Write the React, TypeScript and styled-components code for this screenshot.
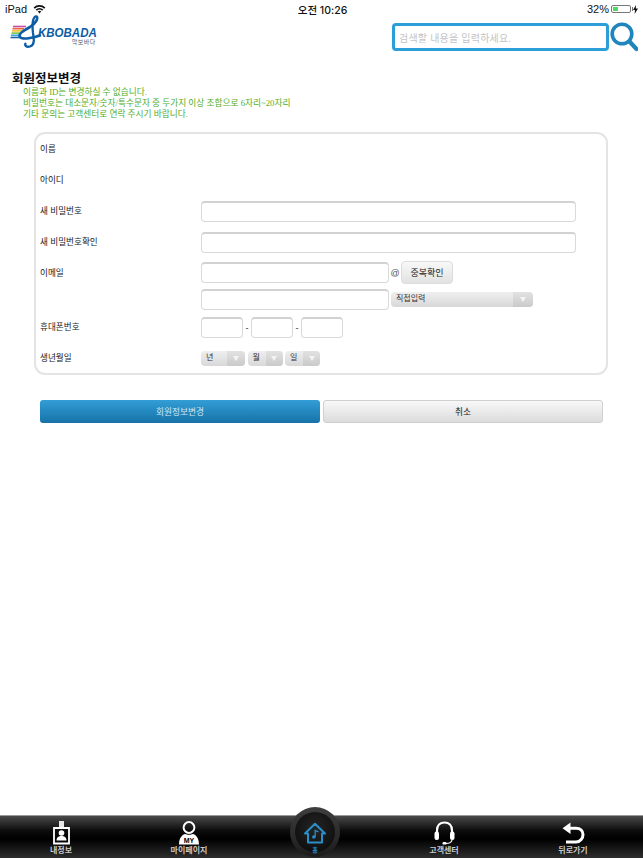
import styled, { createGlobalStyle } from "styled-components";

const GlobalStyle = createGlobalStyle`
  html, body {
    margin: 0;
    padding: 0;
    background: #fff;
    font-family: "Liberation Sans", "Noto Sans CJK KR", sans-serif;
  }
  * { box-sizing: border-box; }
`;

const App = () => {
  return (
    <Page>
      <GlobalStyle />
      <StatusBar>
        <StatusLeft>
          iPad
          <svg width="13" height="10" viewBox="0 0 13 10">
            <path d="M0.6 3.4A8.4 8.4 0 0 1 12.4 3.4L11.2 4.7A6.6 6.6 0 0 0 1.8 4.7Z" fill="#111" />
            <path d="M2.7 5.5A5.4 5.4 0 0 1 10.3 5.5L9.1 6.7A3.7 3.7 0 0 0 3.9 6.7Z" fill="#111" />
            <path d="M4.8 7.5A2.5 2.5 0 0 1 8.2 7.5L6.5 9.4Z" fill="#111" />
          </svg>
        </StatusLeft>
        <StatusTime>오전 10:26</StatusTime>
        <StatusRight>
          32%
          <Battery><BatteryLevel /></Battery>
          <svg width="5" height="9" viewBox="0 0 5 9">
            <path d="M3 0L0 5H2L1.6 9L5 3.6H2.8Z" fill="#111" />
          </svg>
        </StatusRight>
      </StatusBar>

      <Header>
        <Logo>
          <svg width="32" height="34" viewBox="0 0 32 34">
            <path d="M3 11.5H16" stroke="#c64aa5" strokeWidth="1.6" />
            <path d="M2.5 13.7H14" stroke="#e9683a" strokeWidth="1.6" />
            <path d="M2 15.9H12" stroke="#f2c230" strokeWidth="1.6" />
            <path d="M1.5 18.1H10" stroke="#7cc242" strokeWidth="1.6" />
            <path d="M1 20.3H9" stroke="#35a7dc" strokeWidth="1.6" />
            <path d="M0.5 22.5H9" stroke="#1b65b0" strokeWidth="1.6" />
            <path
              d="M26 1C29 3 26 8 20 12C13 16 8 19 10 22C12 25 24 23 31 20"
              fill="none"
              stroke="#0d5ca6"
              strokeWidth="2.6"
            />
            <path
              d="M26 1C22 3 22 10 23 18C24 24 25 30 20 31.5C16 32.5 14 30 16 28"
              fill="none"
              stroke="#0d5ca6"
              strokeWidth="2.3"
            />
          </svg>
          <LogoText>
            <LogoWord>KBOBADA</LogoWord>
            <LogoSub>악보바다</LogoSub>
          </LogoText>
        </Logo>
        <SearchArea>
          <SearchBox>검색할 내용을 입력하세요.</SearchBox>
          <svg width="28" height="30" viewBox="0 0 28 30">
            <circle cx="12" cy="12" r="9.8" fill="none" stroke="#1f86bd" strokeWidth="3.6" />
            <path d="M19.5 19.5L26.5 27" stroke="#1f86bd" strokeWidth="4.2" strokeLinecap="round" />
          </svg>
        </SearchArea>
      </Header>

      <Main>
        <Title>회원정보변경</Title>
        <Notes>
          <p>이름과 ID는 변경하실 수 없습니다.</p>
          <p>비밀번호는 대소문자/숫자/특수문자 중 두가지 이상 조합으로 6자리~20자리</p>
          <p>기타 문의는 고객센터로 연락 주시기 바랍니다.</p>
        </Notes>

        <FormCard>
          <Row><Label>이름</Label></Row>
          <Row><Label>아이디</Label></Row>
          <Row>
            <Label>새 비밀번호</Label>
            <TextField $width={375} />
          </Row>
          <Row>
            <Label>새 비밀번호확인</Label>
            <TextField $width={375} />
          </Row>
          <EmailRow>
            <Label>이메일</Label>
            <EmailFields>
              <EmailLine>
                <TextField $width={188} />
                <AtSign>@</AtSign>
                <CheckButton>중복확인</CheckButton>
              </EmailLine>
              <EmailLine>
                <TextField $width={188} />
                <SelectBox $width={142} $gap={2}>
                  직접입력
                  <SelectArrow $width={20} />
                </SelectBox>
              </EmailLine>
            </EmailFields>
          </EmailRow>
          <Row>
            <Label>휴대폰번호</Label>
            <PhoneFields>
              <TextField $width={42} />
              <Dash>-</Dash>
              <TextField $width={42} />
              <Dash>-</Dash>
              <TextField $width={42} />
            </PhoneFields>
          </Row>
          <Row>
            <Label>생년월일</Label>
            <BirthFields>
              <SelectBox $width={44}>년<SelectArrow $width={18} /></SelectBox>
              <SelectBox $width={35}>월<SelectArrow $width={17} /></SelectBox>
              <SelectBox $width={35}>일<SelectArrow $width={17} /></SelectBox>
            </BirthFields>
          </Row>
        </FormCard>

        <Actions>
          <PrimaryButton>회원정보변경</PrimaryButton>
          <CancelButton>취소</CancelButton>
        </Actions>
      </Main>

      <TabBar>
        <Tab>
          <svg width="17" height="24" viewBox="0 0 17 24">
            <path d="M6 0H11V6H6Z" fill="#e8e8e8" />
            <path d="M1 7H16V22.5H1Z" fill="none" stroke="#fff" strokeWidth="1.8" />
            <circle cx="8.5" cy="12" r="2.8" fill="#fff" />
            <path d="M3.5 19.5C3.5 16 6 15 8.5 15C11 15 13.5 16 13.5 19.5Z" fill="#fff" />
          </svg>
          <TabLabel>내정보</TabLabel>
        </Tab>
        <Tab>
          <svg width="20" height="24" viewBox="0 0 20 24">
            <circle cx="10" cy="6.5" r="5.4" fill="none" stroke="#fff" strokeWidth="2" />
            <path d="M0 23.5C0 16 4 13.5 6 13C8 14 12 14 14 13C16 13.5 20 16 20 23.5Z" fill="#fff" />
            <text x="10" y="22" textAnchor="middle" fontSize="7" fontWeight="700" fill="#000" fontFamily="Liberation Sans">MY</text>
          </svg>
          <TabLabel>마이페이지</TabLabel>
        </Tab>
        <Tab />
        <Tab>
          <svg width="21" height="24" viewBox="0 0 21 24">
            <path d="M3 14V9.5C3 4.5 6 1.5 10.5 1.5C15 1.5 18 4.5 18 9.5V14" fill="none" stroke="#fff" strokeWidth="2.2" />
            <rect x="0.5" y="10.5" width="4.5" height="8.5" rx="2" fill="#fff" />
            <rect x="16" y="10.5" width="4.5" height="8.5" rx="2" fill="#fff" />
            <path d="M18 19C17.5 21.5 15.5 22.5 12 22.5" fill="none" stroke="#fff" strokeWidth="1.2" />
            <rect x="8.5" y="21" width="4" height="2.6" rx="1.2" fill="#fff" />
          </svg>
          <TabLabel>고객센터</TabLabel>
        </Tab>
        <Tab>
          <svg width="23" height="23" viewBox="0 0 23 23">
            <path d="M8.5 0.5V12L0.5 6.2Z" fill="#fff" />
            <path d="M7 6.2H14C18.5 6.2 21 9 21 12.5C21 16 18.5 20 14 20H4" fill="none" stroke="#fff" strokeWidth="3" />
          </svg>
          <TabLabel>뒤로가기</TabLabel>
        </Tab>
        <HomeButton>
          <HomeInner>
            <svg width="22" height="22" viewBox="0 0 22 22">
              <path d="M1 11.5L11 1.8L21 11.5H18V20.5H4V11.5Z" fill="none" stroke="#2a8fc8" strokeWidth="2" strokeLinejoin="round" />
              <path d="M11.2 15V8.5L14.5 9.8" fill="none" stroke="#2a8fc8" strokeWidth="1.3" />
              <circle cx="9.8" cy="15" r="1.7" fill="#2a8fc8" />
            </svg>
            <HomeLabel>홈</HomeLabel>
          </HomeInner>
        </HomeButton>
      </TabBar>
    </Page>
  );
};

export default App;

const Page = styled.div`
  width: 643px;
  height: 858px;
  display: flex;
  flex-direction: column;
  overflow: hidden;
`;

const StatusBar = styled.div`
  height: 17px;
  flex-shrink: 0;
  padding: 1px 5px 0;
  display: grid;
  grid-template-columns: 1fr auto 1fr;
  align-items: center;
  font-size: 11px;
  color: #111;
`;

const StatusLeft = styled.div`
  display: flex;
  align-items: center;
  gap: 6px;
`;

const StatusTime = styled.div`
  font-family: "Inter", "Noto Sans CJK KR", sans-serif;
  font-weight: 500;
  font-size: 10.5px;
  transform: translateX(1px);
`;

const StatusRight = styled.div`
  display: flex;
  align-items: center;
  justify-content: flex-end;
  gap: 2px;
`;

const Battery = styled.div`
  width: 20px;
  height: 8px;
  border: 1px solid #777;
  border-radius: 2px;
  padding: 1px;
  position: relative;
  &::after {
    content: "";
    position: absolute;
    right: -3px;
    top: 1px;
    width: 1px;
    height: 4px;
    background: #777;
  }
`;

const BatteryLevel = styled.div`
  width: 32%;
  height: 100%;
  background: #4cd964;
`;

const Header = styled.header`
  height: 38px;
  flex-shrink: 0;
  display: flex;
  justify-content: space-between;
  align-items: flex-start;
  padding: 0 5px 0 10px;
`;

const Logo = styled.div`
  display: flex;
  align-items: flex-start;
  height: 34px;
  margin-top: -2px;
`;

const LogoText = styled.div`
  margin: 11px 0 0 -4px;
  display: flex;
  flex-direction: column;
  align-items: flex-end;
`;

const LogoWord = styled.div`
  font-size: 11.5px;
  font-style: italic;
  font-weight: 700;
  line-height: 12px;
  color: #0d5ca6;
  transform: scaleY(1.15);
`;

const LogoSub = styled.div`
  font-size: 6px;
  line-height: 6px;
  letter-spacing: 0.5px;
  color: #555;
  margin: 1px 1px 0 0;
`;

const SearchArea = styled.div`
  display: flex;
  align-items: center;
  gap: 1px;
  margin-top: 5px;
`;

const SearchBox = styled.div`
  width: 217px;
  height: 28px;
  border: 3px solid #2c9fd8;
  border-radius: 4px;
  padding-left: 4px;
  display: flex;
  align-items: center;
  font-size: 10px;
  letter-spacing: 0.2px;
  color: #c4c4c4;
`;

const Main = styled.main`
  flex: 1;
  padding: 16px 0 0;
`;

const Title = styled.h1`
  margin: 0 0 0 12px;
  font-size: 12.5px;
  line-height: 16px;
  font-weight: 700;
  color: #111;
`;

const Notes = styled.div`
  margin-left: 23px;
  font-family: "Liberation Serif", "Noto Sans CJK KR", serif;
  font-size: 8.7px;
  line-height: 11px;
  color: #4fae1f;
  p {
    margin: 0;
  }
`;

const FormCard = styled.section`
  width: 574px;
  height: 243px;
  margin: 12px 0 0 34px;
  padding: 0 0 0 4px;
  border: 2px solid #e4e4e4;
  border-radius: 11px;
`;

const Row = styled.div`
  display: grid;
  grid-template-columns: 161px 1fr;
  align-items: center;
  height: 31px;
`;

const EmailRow = styled(Row)`
  height: 54px;
  align-items: start;
  padding-top: 3px;
`;

const Label = styled.div`
  font-size: 8.6px;
  line-height: 25px;
  color: #222;
`;

const TextField = styled.div<{ $width: number }>`
  width: ${(p) => p.$width}px;
  height: 21px;
  background: #fff;
  border: 1px solid #d9d9d9;
  border-top: 2px solid #d2d2d2;
  border-radius: 4px;
`;

const EmailFields = styled.div`
  display: flex;
  flex-direction: column;
  gap: 5px;
`;

const EmailLine = styled.div`
  display: flex;
  align-items: center;
`;

const AtSign = styled.span`
  width: 12px;
  text-align: center;
  font-size: 9px;
  color: #555;
`;

const CheckButton = styled.button`
  width: 52px;
  height: 23px;
  padding: 0;
  border: 1px solid #ddd;
  border-radius: 4px;
  background: linear-gradient(#f8f8f8, #e2e2e2);
  font-family: inherit;
  font-size: 9px;
  color: #222;
`;

const SelectBox = styled.div<{ $width: number; $gap?: number }>`
  position: relative;
  width: ${(p) => p.$width}px;
  height: 15px;
  margin-left: ${(p) => p.$gap ?? 0}px;
  padding-left: 5px;
  border-radius: 4px;
  background: linear-gradient(#efefef, #d8d8d8);
  font-size: 8px;
  line-height: 14px;
  color: #333;
`;

const SelectArrow = styled.span<{ $width: number }>`
  position: absolute;
  top: 0;
  right: 0;
  bottom: 0;
  width: ${(p) => p.$width}px;
  border-radius: 0 4px 4px 0;
  background: linear-gradient(#e2e2e2, #cacaca);
  &::after {
    content: "";
    position: absolute;
    left: calc(50% - 3px);
    top: 5px;
    border-left: 3px solid transparent;
    border-right: 3px solid transparent;
    border-top: 5px solid #f4f4f4;
  }
`;

const PhoneFields = styled.div`
  display: flex;
  align-items: center;
`;

const Dash = styled.span`
  width: 8px;
  text-align: center;
  font-size: 9px;
  color: #333;
`;

const BirthFields = styled.div`
  display: flex;
  gap: 2.5px;
`;

const Actions = styled.div`
  display: flex;
  gap: 3px;
  margin: 25px 0 0 40px;
`;

const PrimaryButton = styled.button`
  width: 280px;
  height: 23px;
  padding: 0;
  border: 0;
  border-radius: 3px;
  background: linear-gradient(#339dd6, #1673a8);
  font-family: inherit;
  font-size: 8.7px;
  color: #d3e8f3;
`;

const CancelButton = styled(PrimaryButton)`
  border: 1px solid #cfcfcf;
  background: linear-gradient(#f8f8f8, #dcdcdc);
  color: #222;
`;

const TabBar = styled.nav`
  position: relative;
  height: 43px;
  flex-shrink: 0;
  padding-right: 5px;
  display: grid;
  grid-template-columns: 122px 134px 124px 128px 1fr;
  border-top: 1px solid #9a9a9a;
  background: linear-gradient(#4a4a4a 0%, #0c0c0c 35%, #000 55%, #2e2e2e 100%);
`;

const Tab = styled.div`
  display: flex;
  flex-direction: column;
  align-items: center;
  justify-content: flex-end;
  padding-bottom: 2px;
`;

const TabLabel = styled.span`
  font-size: 8px;
  line-height: 11px;
  font-weight: 700;
  color: #c9c9c9;
`;

const HomeButton = styled.div`
  position: absolute;
  left: 290px;
  top: -9px;
  width: 50px;
  height: 50px;
  padding: 5px;
  border-radius: 50%;
  background: linear-gradient(#3e3e3e, #1c1c1c);
`;

const HomeInner = styled.div`
  height: 40px;
  border-radius: 50%;
  background: radial-gradient(circle at 50% 40%, #252525 0%, #080808 100%);
  display: flex;
  flex-direction: column;
  align-items: center;
  padding-top: 10px;
  svg {
    flex-shrink: 0;
  }
`;

const HomeLabel = styled.span`
  flex-shrink: 0;
  font-size: 6px;
  line-height: 7px;
  margin-top: 3px;
  font-weight: 700;
  color: #2a8fc8;
`;
